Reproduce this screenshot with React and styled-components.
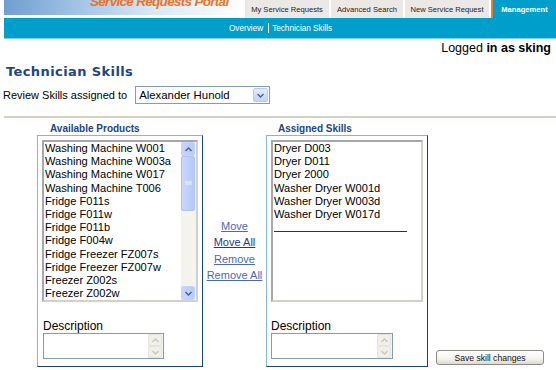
import React from 'react';
import styled, { createGlobalStyle } from 'styled-components';

const GlobalStyle = createGlobalStyle`
	body {
		margin: 0;
		background: #ffffff;
		font-family: "Liberation Sans", Arial, sans-serif;
		color: #000;
	}
`

const Page = styled.div`
	width: 556px;
	height: 370px;
	overflow: hidden;
	padding-left: 4px;
	box-sizing: border-box;
`

const TopBar = styled.div`
	display: flex;
	height: 18px;
	justify-content: space-between;
	align-items: stretch;
`

const Banner = styled.div`
	position: relative;
	width: 238px;
	height: 15px;
	overflow: hidden;
	background: linear-gradient(90deg, #6f9ed0 0%, #a9c8e8 35%, #d8e8f6 62%, #ffffff 100%);
`

const BannerTitle = styled.div`
	position: absolute;
	left: 86px;
	top: -6px;
	font-family: "Liberation Sans", Arial, sans-serif;
	font-size: 13.5px;
	letter-spacing: -0.7px;
	font-weight: bold;
	font-style: italic;
	color: #e7742a;
	white-space: nowrap;
`

const Tabs = styled.div`
	display: flex;
	gap: 2px;
`

const Tab = styled.div`
	display: flex;
	align-items: center;
	justify-content: center;
	width: ${p => p.w}px;
	height: 18px;
	box-sizing: border-box;
	font-size: 7.6px;
	background: ${p => (p.active ? '#009ecb' : '#ece8e6')};
	color: ${p => (p.active ? '#fff' : '#222')};
	font-weight: ${p => (p.active ? 'bold' : 'normal')};
	border-left: ${p => (p.active ? '2px solid #f07a30' : 'none')};
`

const NavBar = styled.div`
	height: 20px;
	background: #009ecb;
	border-bottom: 1px solid #7fd0e8;
	display: flex;
	align-items: center;
	padding-left: 225px;
	font-size: 8.2px;
	color: #fff;
`

const NavSep = styled.span`
	display: inline-block;
	width: 1px;
	height: 10px;
	background: #fff;
	margin: 0 3px 0 5px;
`

const UserLine = styled.div`
	text-align: right;
	padding-right: 5px;
	margin-top: 2px;
	font-size: 12.5px;
	height: 15px;
	line-height: 15px;
	b { font-weight: bold; }
`

const Title = styled.h1`
	margin: 8px 0 0 2px;
	font-family: "DejaVu Sans", Verdana, sans-serif;
	font-size: 13px;
	letter-spacing: 0.4px;
	font-weight: bold;
	color: #1b4586;
	line-height: 16px;
`

const ReviewRow = styled.div`
	display: flex;
	align-items: center;
	gap: 8px;
	margin-top: 6px;
	margin-left: -1px;
	font-size: 11px;
`

const Select = styled.div`
	display: flex;
	align-items: center;
	justify-content: space-between;
	width: 135px;
	height: 18px;
	box-sizing: border-box;
	border: 1px solid #7f9db9;
	padding-left: 3px;
	font-size: 11.4px;
	background: #fff;
`

const ArrowBtn = styled.div`
	width: 15px;
	height: 14px;
	margin-right: 1px;
	border-radius: 2px;
	background: linear-gradient(180deg, #e3ecfd 0%, #c1d3fb 100%);
	border: 1px solid #b9cbf3;
	box-sizing: border-box;
	display: flex;
	align-items: center;
	justify-content: center;
`

const Rule = styled.div`
	height: 2px;
	background: #d4d0c4;
	margin-top: 12px;
`

const Panels = styled.div`
	display: flex;
	align-items: flex-end;
	padding-left: 33px;
	margin-top: 5px;
`

const Column = styled.div`
	display: flex;
	flex-direction: column;
`

const Legend = styled.div`
	font-size: 10px;
	font-weight: bold;
	color: #1b4586;
	padding-left: ${p => p.indent}px;
	height: 12px;
	line-height: 12px;
`

const Box = styled.div`
	width: ${p => p.w}px;
	height: 232px;
	box-sizing: border-box;
	border-style: solid;
	border-width: 1px;
	border-color: #86b6d6 #17427e #17427e #86b6d6;
	padding: 4px 4px 0 4px;
`

const ListBox = styled.div`
	display: flex;
	width: ${p => p.w}px;
	height: 162px;
	box-sizing: border-box;
	border: 2px solid #a7a6aa;
	border-right-color: #d4d0c8;
	border-bottom-color: #d4d0c8;
	background: #fff;
	overflow: hidden;
`

const Items = styled.div`
	flex: 1;
	padding-left: 1px;
`

const Item = styled.div`
	font-size: 11.1px;
	height: 13.2px;
	line-height: 13.2px;
	white-space: nowrap;
`

const Divider = styled.div`
	width: 133px;
	height: 1px;
	background: #333;
	margin-top: 10px;
`

const ScrollTrack = styled.div`
	width: 14px;
	display: flex;
	flex-direction: column;
	background: #f4f3ee;
	padding-right: 1px;
`

const ScrollBtn = styled.div`
	height: 14px;
	box-sizing: border-box;
	border: 1px solid #c3d3fd;
	border-radius: 2px;
	background: ${p => (p.disabled ? '#f0efea' : 'linear-gradient(90deg, #c6d6fc, #b6cbf9)')};
	border-color: ${p => (p.disabled ? '#e6e4dc' : '#c3d3fd')};
	display: flex;
	align-items: center;
	justify-content: center;
`

const Thumb = styled.div`
	height: 55px;
	border-radius: 2px;
	background: linear-gradient(90deg, #c9d8fc, #b4c9f8);
	border: 1px solid #aec4f6;
	box-sizing: border-box;
	display: flex;
	align-items: center;
	justify-content: center;
`

const Spacer = styled.div`
	flex: 1;
`

const FieldLabel = styled.div`
	font-size: 12px;
	margin-top: ${p => p.top}px;
	padding-left: ${p => p.indent}px;
	height: 13px;
	line-height: 13px;
`

const TextArea = styled.div`
	display: flex;
	width: ${p => p.w}px;
	height: 26px;
	margin-left: ${p => p.indent}px;
	box-sizing: border-box;
	border: 1px solid #7f9db9;
	background: #fff;
`

const Moves = styled.div`
	width: 63px;
	height: 232px;
	display: flex;
	flex-direction: column;
	align-items: center;
	padding-top: 85px;
	box-sizing: border-box;
	gap: 4px;
`

const MoveLink = styled.a`
	font-size: 11px;
	line-height: 12.4px;
	color: ${p => (p.dark ? '#1d3c8f' : '#4a68c0')};
	text-decoration: underline;
	cursor: pointer;
`

const SaveButton = styled.button`
	margin-left: 8px;
	margin-bottom: 2px;
	width: 108px;
	height: 15px;
	padding: 0;
	font-family: "Liberation Sans", Arial, sans-serif;
	font-size: 8.6px;
	color: #111;
	border: 1px solid #8c8c84;
	border-radius: 3px;
	background: linear-gradient(180deg, #ffffff 0%, #f4f3ee 60%, #dcd9cd 100%);
`

function Chevron({ up, color = '#4d6185' }) {
	return (
		<svg width="7" height="5" viewBox="0 0 7 5">
			<path d={up ? 'M0.5 4 L3.5 1 L6.5 4' : 'M0.5 1 L3.5 4 L6.5 1'} fill="none" stroke={color} strokeWidth="1.4" />
		</svg>
	)
}

function Grip() {
	return (
		<svg width="7" height="5" viewBox="0 0 7 5">
			<path d="M0 1 H7 M0 3 H7" stroke="#eef3fe" strokeWidth="1" />
		</svg>
	)
}

function Scrollbar() {
	return (
		<ScrollTrack>
			<ScrollBtn><Chevron up /></ScrollBtn>
			<Thumb><Grip /></Thumb>
			<Spacer />
			<ScrollBtn><Chevron /></ScrollBtn>
		</ScrollTrack>
	)
}

function DescBox({ w, indent }) {
	return (
		<TextArea w={w} indent={indent}>
			<Spacer />
			<ScrollTrack>
				<ScrollBtn disabled><Chevron up color="#c9c7ba" /></ScrollBtn>
				<ScrollBtn disabled><Chevron color="#c9c7ba" /></ScrollBtn>
			</ScrollTrack>
		</TextArea>
	)
}

const products = [
	'Washing Machine W001',
	'Washing Machine W003a',
	'Washing Machine W017',
	'Washing Machine T006',
	'Fridge F011s',
	'Fridge F011w',
	'Fridge F011b',
	'Fridge F004w',
	'Fridge Freezer FZ007s',
	'Fridge Freezer FZ007w',
	'Freezer Z002s',
	'Freezer Z002w',
]

const skills = [
	'Dryer D003',
	'Dryer D011',
	'Dryer 2000',
	'Washer Dryer W001d',
	'Washer Dryer W003d',
	'Washer Dryer W017d',
]

export default function App() {
	return (
		<Page>
			<GlobalStyle />
			<TopBar>
				<Banner>
					<BannerTitle>Service Requests Portal</BannerTitle>
				</Banner>
				<Tabs>
					<Tab w={84}>My Service Requests</Tab>
					<Tab w={72}>Advanced Search</Tab>
					<Tab w={84}>New Service Request</Tab>
					<Tab w={65} active>Management</Tab>
				</Tabs>
			</TopBar>
			<NavBar>
				<span>Overview</span>
				<NavSep />
				<span>Technician Skills</span>
			</NavBar>
			<UserLine>Logged <b>in as sking</b></UserLine>
			<Title>Technician Skills</Title>
			<ReviewRow>
				<span>Review Skills assigned to</span>
				<Select>
					<span>Alexander Hunold</span>
					<ArrowBtn><Chevron /></ArrowBtn>
				</Select>
			</ReviewRow>
			<Rule />
			<Panels>
				<Column>
					<Legend indent={13}>Available Products</Legend>
					<Box w={166}>
						<ListBox w={156}>
							<Items>
								{products.map(p => <Item key={p}>{p}</Item>)}
							</Items>
							<Scrollbar />
						</ListBox>
						<FieldLabel top={18} indent={1}>Description</FieldLabel>
						<DescBox w={121} indent={1} />
					</Box>
				</Column>
				<Moves>
					<MoveLink>Move</MoveLink>
					<MoveLink dark>Move All</MoveLink>
					<MoveLink>Remove</MoveLink>
					<MoveLink>Remove All</MoveLink>
				</Moves>
				<Column>
					<Legend indent={12}>Assigned Skills</Legend>
					<Box w={162}>
						<ListBox w={152}>
							<Items>
								{skills.map(s => <Item key={s}>{s}</Item>)}
								<Divider />
							</Items>
						</ListBox>
						<FieldLabel top={18} indent={-1}>Description</FieldLabel>
						<DescBox w={122} indent={0} />
					</Box>
				</Column>
				<SaveButton>Save skill changes</SaveButton>
			</Panels>
		</Page>
	);
}
